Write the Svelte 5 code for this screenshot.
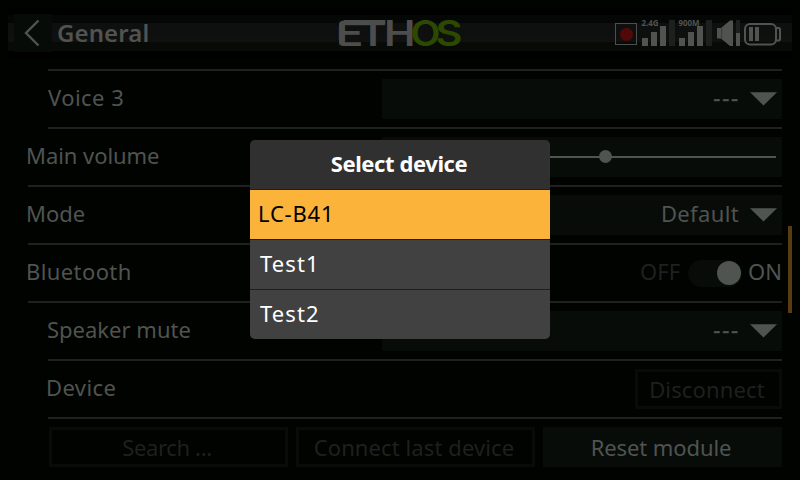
<script>
  const devices = [
    { name: 'LC-B41', ls: 0.8 },
    { name: 'Test1', ls: 1.1 },
    { name: 'Test2', ls: 1.1 }
  ];
  let selected = $state(0);
  const rows = [
    { label: 'Voice 3', kind: 'select', value: '---', x: 48, ls: 0.45 },
    { label: 'Main volume', kind: 'slider', x: 26, ls: -0.05 },
    { label: 'Mode', kind: 'select', value: 'Default', x: 26, ls: 0 },
    { label: 'Bluetooth', kind: 'toggle', x: 26, ls: 0.4 },
    { label: 'Speaker mute', kind: 'select', value: '---', x: 47, ls: 0 },
    { label: 'Device', kind: 'button', value: 'Disconnect', x: 46, ls: 0.4 }
  ];
  const dividerNested = [true, false, false, false, true, true];
  const actions = [
    { label: 'Search ...', disabled: true, ls: -0.35 },
    { label: 'Connect last device', disabled: true, ls: 0.1 },
    { label: 'Reset module', disabled: false, ls: -0.1 }
  ];
  const letters = [
    ['E', -2.5, 28, '#4d4d4d'],
    ['T', 21, 28, '#4d4d4d'],
    ['H', 46, 31.5, '#4d4d4d'],
    ['O', 72.5, 30, '#2b4a00'],
    ['S', 97.5, 27, '#2b4a00']
  ];
</script>

<div class="screen">
  <header>
    <button class="back" aria-label="Back">
      <svg width="38" height="38" viewBox="0 0 38 38"><path d="M24.5 6.5 L12 19 L24.5 31.5" fill="none" stroke="#505350" stroke-width="2.4" /></svg>
    </button>
    <h1>General</h1>
    <svg class="logo" width="136" height="50" viewBox="-6 -10 136 50">
      {#each letters as [ch, x, w, fill]}
        <text {x} y="28" textLength={w} lengthAdjust="spacingAndGlyphs" {fill}>{ch}</text>
      {/each}
      <rect x="4" y="2.6" width="43" height="4.6" fill="#4d4d4d" />
      <path d="M-1 1.5 H6 V2.5 Q0.5 2.5 0.5 8.5 H-1 Z M-1 29 H6 V28.2 Q0.5 28.2 0.5 22 H-1 Z" fill="#0a0c0a" />
    </svg>
    <svg class="status" width="170" height="38" viewBox="614 14 170 38">
      <rect x="615.5" y="23.5" width="21" height="21" fill="none" stroke="#4c504c" />
      <circle cx="626.5" cy="34.3" r="6.6" fill="#500808" />
      <g fill="#505450">
        <rect x="642" y="38" width="6" height="8" /><rect x="651" y="32" width="6" height="14" /><rect x="660" y="26" width="6" height="20" />
        <rect x="679" y="38" width="6" height="8" /><rect x="688" y="32" width="6" height="14" /><rect x="697" y="26" width="6" height="20" />
        <path d="M717 28 H721 L730 20.5 H733 V46 H730 L721 38.5 H717 Z" />
        <rect x="736" y="33" width="4" height="13" />
        <rect x="749" y="27" width="4" height="14" /><rect x="755" y="27" width="4" height="14" />
      </g>
      <path d="M721.7 28 V38.5" stroke="#303330" stroke-width=".8" />
      <g fill="#1d211e"><rect x="669" y="20" width="6" height="26" /><rect x="706" y="20" width="6" height="26" /><rect x="736" y="20" width="4" height="13" /></g>
      <rect x="745" y="24" width="31" height="20.5" rx="5" fill="none" stroke="#505450" stroke-width="2" />
      <path d="M776 28 H779 L780 29 V39.5 L779 40.5 H776" fill="none" stroke="#505450" stroke-width="2" />
      <text x="641.5" y="26" textLength="17" lengthAdjust="spacingAndGlyphs">2.4G</text>
      <text x="678.5" y="26" textLength="21" lengthAdjust="spacingAndGlyphs">900M</text>
    </svg>
  </header>

  <main>
    <div class="divider nested"></div>
    {#each rows as row, i}
      <div class="row">
        <span class="label" style:padding-left="{row.x}px" style:letter-spacing="{row.ls}px">{row.label}</span>
        {#if row.kind === 'select'}
          <div class="field select">
            <span class:dashes={row.value === '---'}>{row.value}</span>
            <svg width="27" height="14" viewBox="0 0 27 14"><path d="M0 .2 H27 L13.5 13.4 Z" fill="#505450" /></svg>
          </div>
        {:else if row.kind === 'slider'}
          <div class="field slider"><div class="track"><i></i></div></div>
        {:else if row.kind === 'toggle'}
          <div class="toggle"><span class="off">OFF</span><div class="switch"><i></i></div><span class="on">ON</span></div>
        {:else}
          <button class="btn disabled disconnect">{row.value}</button>
        {/if}
      </div>
      <div class="divider" class:nested={dividerNested[i]}></div>
    {/each}
    <div class="actions">
      {#each actions as action}
        <button class="btn" class:disabled={action.disabled} style:letter-spacing="{action.ls}px">{action.label}</button>
      {/each}
    </div>
  </main>
  <div class="scrollbar"></div>

  <div class="dialog" role="dialog" aria-label="Select device">
    <h2>Select device</h2>
    {#each devices as device, i}
      <button class="item" class:selected={selected === i} style:letter-spacing="{device.ls}px" onclick={() => (selected = i)}>{device.name}</button>
    {/each}
  </div>
</div>

<style>
  :global(body) { margin: 0; background: #000300; }
  .screen { position: relative; box-sizing: border-box; width: 800px; height: 480px; overflow: hidden; background: #000300; color: #505350; font: 22px/30px 'Noto Sans', sans-serif; padding-top: 8px; }
  button { font: inherit; color: inherit; border: 0; margin: 0; padding: 0; background: none; }
  svg { display: block; flex: none; }
  header { box-sizing: border-box; height: 50px; margin: 0 8px; padding: 6px 0 0 6px; display: flex; background: linear-gradient(#000 0 7px, #050706 7px 15px, #0e0f0e 15px 20px, #0d100e 20px 29px, #101010 29px 34px, #080a08 34px 43px, #000 43px); }
  .back { width: 38px; height: 38px; background: #060b08; }
  h1 { margin: 0 0 0 5px; font-size: 24px; line-height: 37px; font-weight: 600; letter-spacing: .1px; width: 275px; }
  .logo { margin-top: -6px; }
  .logo text { font: 600 35px Inter, sans-serif; }
  .status { margin-left: auto; margin-right: 8px; }
  .status text { font: 700 9px 'Noto Sans', sans-serif; fill: #505450; }
  main { width: 782px; padding-top: 11px; }
  .divider { height: 2px; margin-left: 28px; background: #1e221f; }
  .divider.nested { margin-left: 48px; }
  .row { height: 56px; display: flex; align-items: center; justify-content: space-between; }
  .label { padding-bottom: 4px; white-space: nowrap; }
  .field { box-sizing: border-box; width: 400px; height: 40px; background: #070c09; display: flex; align-items: center; }
  .select { justify-content: flex-end; gap: 11px; padding-right: 5px; letter-spacing: .35px; }
  .select span { padding-bottom: 4px; }
  .select .dashes { letter-spacing: 1.8px; margin-right: -1px; padding-bottom: 4px; -webkit-text-stroke: .4px #505350; }
  .slider { padding: 0 6px; }
  .track { flex: 1; height: 2px; margin-bottom: 1px; background: #505450; padding-left: 211px; display: flex; align-items: center; }
  .track i { width: 13px; height: 13px; flex: none; border-radius: 50%; background: #505450; }
  .toggle { display: flex; align-items: center; }
  .toggle span { padding-bottom: 4px; }
  .off { color: #1e211f; margin-right: 8px; }
  .switch { box-sizing: border-box; width: 54px; height: 27px; border-radius: 14px; background: #070c09; display: flex; justify-content: flex-end; align-items: center; padding-right: 1px; margin-right: 6px; }
  .switch i { width: 24px; height: 24px; border-radius: 50%; background: #505450; }
  .btn { box-sizing: border-box; height: 40px; background: #070c09; flex: 1; border: 3px solid #070c09; white-space: nowrap; }
  .btn.disabled { background: transparent; color: #1e201f; }
  .disconnect { flex: none; width: 147px; letter-spacing: .15px; padding-right: 3px; }
  .actions { display: flex; gap: 8px; padding: 8px 0 0 49px; }
  .actions .btn { padding-right: 3px; }
  .scrollbar { position: absolute; left: 788px; top: 226px; width: 4px; height: 87px; background: #593c11; }
  .dialog { position: absolute; left: 250px; top: 140px; width: 300px; height: 199px; border-radius: 5px; overflow: hidden; background: #1e1e1e; display: flex; flex-direction: column; gap: 1px; }
  h2 { margin: 0; height: 49px; background: #303030; color: #fff; font-size: 22px; line-height: 47px; font-weight: 700; text-align: center; letter-spacing: -.4px; padding-right: 2px; }
  .item { height: 49px; line-height: 47px; padding: 0 0 2px 10px; text-align: left; background: #414141; color: #fff; }
  .item.selected { background: #fbb33a; color: #000; padding-left: 8px; }
</style>
